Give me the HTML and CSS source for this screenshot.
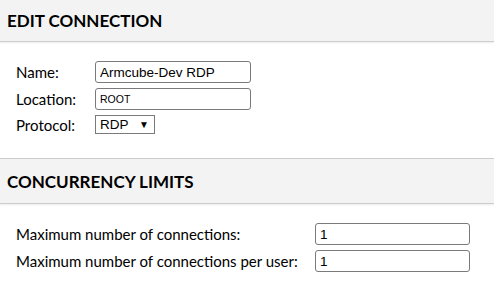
FILE: index.html
```html
<!DOCTYPE html>
<html lang="en">
<head>
    <meta charset="UTF-8">
    <meta name="viewport" content="width=device-width, initial-scale=1.0">
    <link rel="stylesheet" href="styles.css">
    <title>Edit Connection</title>
</head>
<body>
    <div class="header first">
        <h2>EDIT CONNECTION</h2>
    </div>
    <div class="section">
        <div class="props conn">
            <label>Name:</label>
            <input type="text" class="field" value="Armcube-Dev RDP">
            <label>Location:</label>
            <div class="field location">ROOT</div>
            <label>Protocol:</label>
            <div class="select">RDP <span class="arrow">&#9660;</span></div>
        </div>
    </div>
    <div class="header second">
        <h2>CONCURRENCY LIMITS</h2>
    </div>
    <div class="section">
        <div class="props limits">
            <label>Maximum number of connections:</label>
            <input type="text" class="field" value="1">
            <label>Maximum number of connections per user:</label>
            <input type="text" class="field" value="1">
        </div>
    </div>
</body>
</html>
```

FILE: styles.css
```css
body {
    margin: 0;
    background-color: #ffffff;
    font-family: Lato, "Noto Sans", sans-serif;
    color: #000000;
}
.header {
    height: 41px;
    background-color: #f3f3f3;
    border-bottom: 1px solid #cccccc;
    box-shadow: 0 1px 2px rgba(0, 0, 0, 0.08);
    display: flex;
    align-items: center;
}
.header.second {
    border-top: 1px solid #cccccc;
    height: 44px;
}
.header h2 {
    margin: 0 0 0 7px;
    font-size: 17px;
    font-weight: bold;
}
.section {
    padding: 19px 16px 24px 16px;
}
.props {
    display: grid;
    align-items: center;
    row-gap: 5px;
}
.props.conn {
    grid-template-columns: 79px 156px;
}
.props.limits {
    grid-template-columns: 299px 155px;
}
.props label {
    font-size: 15px;
}
.field {
    box-sizing: border-box;
    height: 22px;
    margin: 0;
    padding: 0 4px;
    border: 1px solid #7a7a7a;
    border-radius: 3px;
    font-family: "Liberation Sans", Arial, sans-serif;
    font-size: 13.5px;
    color: #000000;
    background: #ffffff;
    outline: none;
}
.location {
    display: flex;
    align-items: center;
    font-size: 10.5px;
}
.select {
    box-sizing: border-box;
    width: 60px;
    height: 19px;
    padding: 0 5px 0 4px;
    border: 1px solid #7a7a7a;
    font-family: "Liberation Sans", Arial, sans-serif;
    font-size: 13.5px;
    display: flex;
    align-items: center;
    justify-content: space-between;
}
.arrow {
    font-size: 10px;
}
```
